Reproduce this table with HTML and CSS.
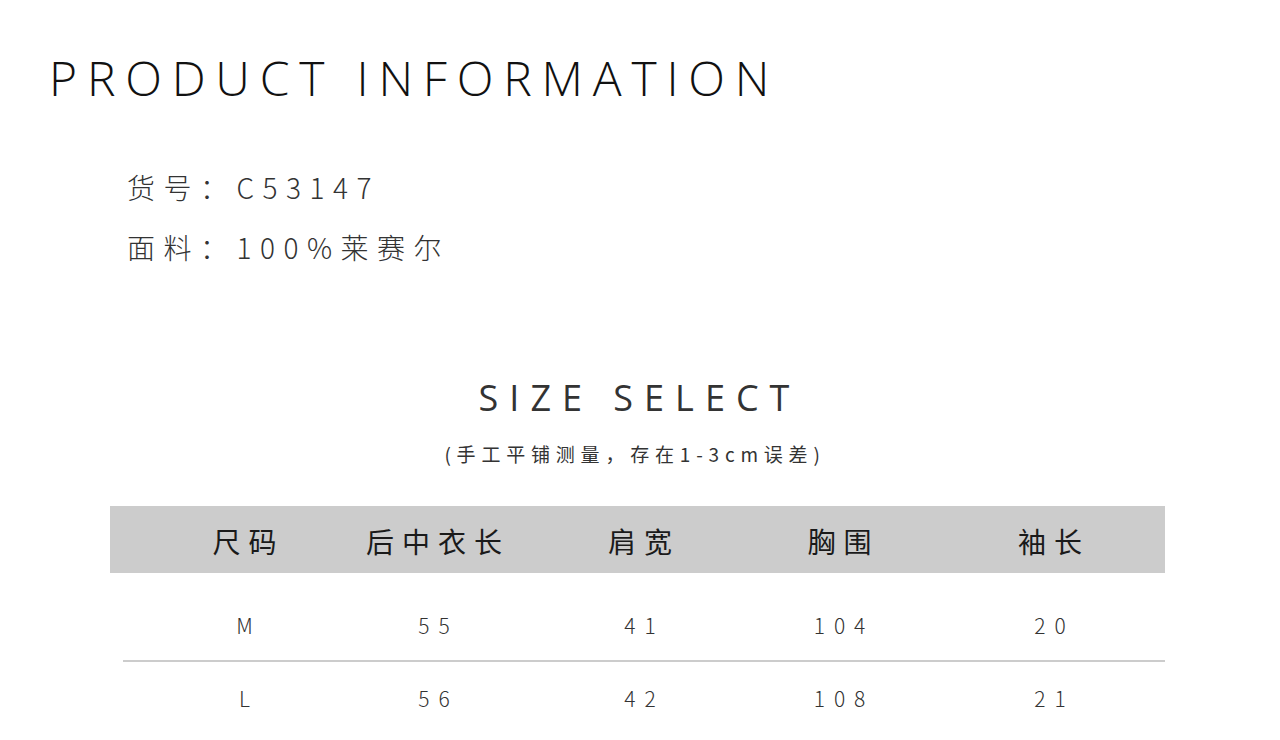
FILE: index.html
```html
<!DOCTYPE html>
<html lang="zh-CN">
<head>
<meta charset="utf-8">
<title>Product Information</title>
<link rel="stylesheet" href="styles.css">
</head>
<body>
<main class="page">
  <h1 class="title">PRODUCT INFORMATION</h1>
  <section class="info">
    <p class="info-line">货号：<span class="latin">C53147</span></p>
    <p class="info-line">面料：<span class="latin">100%</span>莱赛尔</p>
  </section>
  <section class="size">
    <h2 class="size-title">SIZE SELECT</h2>
    <p class="size-note">(手工平铺测量，存在1-3cm误差)</p>
    <div class="table">
      <div class="thead">
        <span>尺码</span><span>后中衣长</span><span>肩宽</span><span>胸围</span><span>袖长</span>
      </div>
      <div class="tbody">
        <div class="row">
          <span>M</span><span>55</span><span>41</span><span>104</span><span>20</span>
        </div>
        <div class="row">
          <span>L</span><span>56</span><span>42</span><span>108</span><span>21</span>
        </div>
      </div>
    </div>
  </section>
</main>
</body>
</html>
```
FILE: styles.css
```css
* { box-sizing: border-box; }
html, body { margin: 0; padding: 0; background: #fff; }
body {
  font-family: "Noto Sans CJK SC", "Noto Sans", sans-serif;
  color: #333;
  width: 1280px;
  height: 740px;
  overflow: hidden;
}
.page { padding-top: 52px; }
.title {
  margin: 0 0 0 49px;
  font-family: "Open Sans", "Noto Sans", sans-serif;
  font-weight: 300;
  font-size: 48px;
  line-height: 52px;
  letter-spacing: 9.8px;
  color: #111;
}
.info { margin: 53px 0 0 127px; }
.info-line {
  margin: 0;
  font-size: 28px;
  line-height: 60px;
  letter-spacing: 8.5px;
  font-weight: 300;
  color: #333;
}
.size { margin-top: 101px; }
.size-title {
  margin: 0;
  text-align: center;
  font-family: "Open Sans", "Noto Sans", sans-serif;
  font-weight: 400;
  font-size: 36px;
  line-height: 40px;
  letter-spacing: 11px;
  padding-right: 1px;
  color: #333;
}
.size-note {
  margin: 24px 0 0;
  text-align: center;
  font-size: 19px;
  line-height: 24px;
  letter-spacing: 5.8px;
  padding-right: 10px;
  color: #333;
}
.table { margin: 40px 0 0 110px; width: 1055px; }
.thead, .row {
  display: grid;
  grid-template-columns: 189px 190px 222px 177px 244px;
  padding-left: 40px;
  align-items: center;
}
.thead span, .row span { text-align: center; }
.thead {
  height: 67px;
  padding-top: 3px;
  background: #cccccc;
  font-size: 28px;
  letter-spacing: 8px;
  color: #1a1a1a;
}
.thead span { padding-left: 8px; }
.tbody { margin-left: 13px; }
.tbody .row { padding-left: 27px; }
.row {
  height: 74px;
  font-size: 21px;
  letter-spacing: 9px;
  color: #333;
  font-weight: 300;
}
.row span { padding-left: 9px; }
.row + .row { border-top: 2px solid #cccccc; }
.tbody .row:first-child { height: 87px; padding-top: 17px; }
```
